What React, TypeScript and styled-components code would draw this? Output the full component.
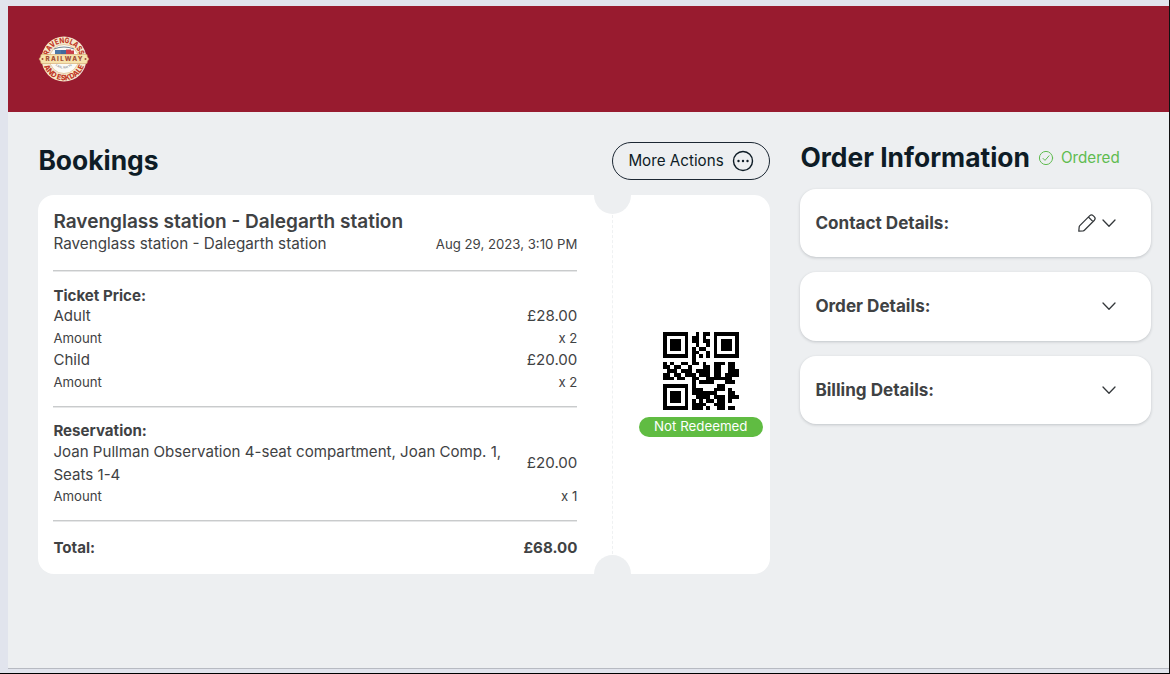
import React from "react";
import styled, { createGlobalStyle } from "styled-components";

const Global = createGlobalStyle`
  * { box-sizing: border-box; }
  body { margin: 0; background: #e1e4ed; font-family: Inter, sans-serif; color: #3f4244; }
  h1, h2, h3, p { margin: 0; }
`;
const Frame = styled.div`
  height: 674px; padding: 6px 0 4px 8px; overflow: hidden;
  background: #e1e4ed; border-right: 1px solid #111; border-bottom: 1px solid #000;
`;
const Page = styled.div`
  height: 663px; background: #edeff1; border-bottom: 1px solid #b7bac2;
`;
const Header = styled.header`
  height: 106px; padding: 0 30px; display: flex; align-items: center; background: #981b2f;
`;
const Content = styled.main`
  display: grid; grid-template-columns: 732px 351px; column-gap: 30px; padding: 30px 0 0 30.4px;
`;
const BookingsHead = styled.div`
  height: 38px; display: flex; align-items: center; justify-content: space-between;
`;
const Heading = styled.h1`
  padding-bottom: 2px; font-size: 26.4px; line-height: 32px; font-weight: 700; color: #0e1c26; white-space: nowrap;
`;
const ActionsButton = styled.button`
  width: 158px; height: 38px; padding: 0 15px; border: 1px solid #1c2733; border-radius: 19px;
  display: flex; align-items: center; justify-content: space-between;
  background: transparent; color: #0e1c26; font: 400 15.2px Inter, sans-serif; white-space: nowrap;
`;
const ActionsLabel = styled.span`padding-bottom: 1px;`;
const Ticket = styled.section`
  position: relative; display: flex; height: 379.4px; margin-top: 15px; overflow: hidden;
  border-radius: 16px; background: #fff;
`;
const Details = styled.div`
  width: 574.5px; padding: 15px 34.5px 0 15px; border-right: 1px dashed #eff1f2;
`;
const Notch = styled.span<{ $edge: "top" | "bottom" }>`
  position: absolute; left: 555.6px; ${(p) => p.$edge}: -19px;
  width: 37px; height: 38px; border-radius: 50%; background: #edeff1;
`;
const Stub = styled.div`
  flex: 1; display: flex; flex-direction: column; align-items: center; padding: 137px 0 0 18.3px;
`;
const Badge = styled.div`
  width: 124px; height: 20px; margin-top: 6.5px; border-radius: 10px; background: #60bc42;
  color: #fff; font-size: 13.3px; line-height: 19px; text-align: center;
`;
const TripTitle = styled.h2`
  font-size: 19.05px; line-height: 23px; height: 23px; font-weight: 600; white-space: nowrap;
`;
const Row = styled.div<{ $h: number; $size?: number; $bold?: boolean; $lift?: boolean }>`
  display: flex; align-items: center; justify-content: space-between;
  height: ${(p) => p.$h}px; padding-bottom: ${(p) => (p.$lift ? 1.5 : 0)}px;
  font-size: ${(p) => p.$size ?? 15.1}px; line-height: 23px;
  font-weight: ${(p) => (p.$bold ? 700 : 400)}; white-space: nowrap;
`;
const TripRow = styled(Row)`line-height: 20px; padding-bottom: 0; font-size: 15.25px;`;
const Small = styled.span`font-size: 13.2px;`;
const SeatName = styled.span`width: 460px; white-space: normal;`;
const Rule = styled.hr<{ $top: number }>`
  height: 2px; margin: ${(p) => p.$top}px 0 13px; border: 0; border-top: 1px solid #c9cbcc; border-bottom: 1px solid #e6e7e8;
`;
const OrderHead = styled.div`
  display: flex; align-items: center; height: 32px; margin-bottom: 15px;
`;
const Status = styled.span`
  display: flex; align-items: center; gap: 7px; margin-left: 8px; color: #60bc50; font-size: 15.2px; line-height: 18px;
`;
const Panel = styled.section<{ $h: number }>`
  display: flex; align-items: center; justify-content: space-between;
  height: ${(p) => p.$h}px; margin-bottom: 15px; padding: 0 34px 1px 15px; border-radius: 16px;
  background: #fff; box-shadow: 0 1px 3px rgba(40, 50, 60, 0.22);
`;
const PanelTitle = styled.h3`font-size: 17.1px; line-height: 20px; font-weight: 650;`;
const Icons = styled.div`display: flex; align-items: center; gap: 4px;`;

const Logo = () => (
  <svg width="52" height="48" viewBox="0 0 52 48" fontFamily="Inter, sans-serif">
    <circle cx="26" cy="24" r="22.5" fill="#f5e9cc" />
    <circle cx="26" cy="24" r="14.5" fill="#fbfaf5" stroke="#d8ad7c" strokeWidth=".6" />
    <path id="arcTop" d="M10 24a16 16 0 0 1 32 0" fill="none" />
    <path id="arcBottom" d="M4.7 24a21.3 21.3 0 0 0 42.6 0" fill="none" />
    <path id="arcInner" d="M15 24.500a11 9 0 0 0 22 0" fill="none" />
    <text fontSize="7.6" fontWeight="800" fill="#c23a28">
      <textPath href="#arcTop" startOffset="50%" textAnchor="middle" textLength="43" lengthAdjust="spacingAndGlyphs">RAVENGLASS</textPath>
    </text>
    <text fontSize="7.6" fontWeight="800" fill="#c23a28">
      <textPath href="#arcBottom" startOffset="50%" textAnchor="middle" textLength="52" lengthAdjust="spacingAndGlyphs">AND ESKDALE</textPath>
    </text>
    <text fontSize="3" fill="#5b6b78">
      <textPath href="#arcInner" startOffset="50%" textAnchor="middle">LAAL RATTY</textPath>
    </text>
    <path d="M16 14q10-4 20 0" stroke="#53697c" strokeWidth=".8" fill="none" />
    <path d="M17 15h6v4h-6z" fill="#4c78a5" />
    <path d="M23 15h5v4h-5z" fill="#426b9c" />
    <path d="M28 14.5h5v1h3v3.5h-8z" fill="#c8404a" />
    <path d="M3 19.5h46q-.2 2.5 2 4.5-2.2 2-2 4.5H3q.2-2.5-2-4.5 2.2-2 2-4.5z" fill="#f6e2ac" stroke="#d2a568" strokeWidth=".6" />
    <text x="26" y="26.3" fontSize="6.3" fontWeight="800" fill="#a24d35" textAnchor="middle" textLength="37">RAILWAY</text>
    <circle cx="4.5" cy="24" r="1" fill="#a24d35" />
    <circle cx="47.5" cy="24" r="1" fill="#a24d35" />
  </svg>
);

const qr = [
  "111111100101101111111",
  "100000101101001000001",
  "101110101101101011101",
  "101110100100101011101",
  "101110101011001011101",
  "100000101100101000001",
  "111111101010101111111",
  "000000001000000000000",
  "101001101101001110110",
  "110110010001101100110",
  "011101110111101100111",
  "110110111011101101111",
  "111011001100111111100",
  "000000001011110001110",
  "111111101000000110000",
  "100000101110001110100",
  "101110101111111000110",
  "101110100111101110111",
  "101110101010110110100",
  "100000101111001110000",
  "111111101110100110110",
];
const QrCode = () => (
  <svg width="76" height="78" viewBox="0 0 21 21" preserveAspectRatio="none" shapeRendering="crispEdges">
    <path fill="#000" d={qr.map((r, y) => [...r].map((c, x) => (c === "1" ? `M${x} ${y}h1v1h-1z` : "")).join("")).join("")} />
  </svg>
);
const Chevron = () => (
  <svg width="16" height="16" viewBox="0 0 16 16" fill="none" stroke="#34383b" strokeWidth="1.3" strokeLinecap="round" strokeLinejoin="round">
    <path d="M2 5l6 6.2L14 5" />
  </svg>
);
const Pencil = () => (
  <svg width="20" height="20" viewBox="0 0 20 20" fill="none" stroke="#34383b" strokeWidth="1.25" strokeLinejoin="round">
    <path d="M1.8 18.2l.4-4.4q.1-.7.6-1.2L12.8 2.6q1.7-1.5 3.3 0l1.3 1.3q1.500 1.600 0 3.300L7.400 17.200q-.5.5-1.2.6zM11.400 4l4.600 4.600" />
  </svg>
);
const Dots = () => (
  <svg width="22" height="22" viewBox="0 0 22 22" fill="none">
    <circle cx="11" cy="11" r="9.5" stroke="#0e1c26" strokeWidth="1.4" />
    <g fill="#0e1c26"><circle cx="6.5" cy="11" r="1.2" /><circle cx="11" cy="11" r="1.2" /><circle cx="15.5" cy="11" r="1.2" /></g>
  </svg>
);
const Check = () => (
  <svg width="16" height="16" viewBox="0 0 16 16" fill="none" stroke="#60bc50" strokeLinecap="round" strokeLinejoin="round">
    <circle cx="8" cy="8" r="6.6" /><path d="M5 8.4l2 2 4-4.6" />
  </svg>
);

const Fare = ({ name, price }: { name: string; price: string }) => (
  <>
    <Row $h={22} $lift><span>{name}</span><span>{price}</span></Row>
    <Row $h={22} $size={13.2}><span>Amount</span><span>x 2</span></Row>
  </>
);

export default function App() {
  return (
    <Frame>
      <Global />
      <Page>
        <Header><Logo /></Header>
        <Content>
          <div>
            <BookingsHead>
              <Heading>Bookings</Heading>
              <ActionsButton><ActionsLabel>More Actions</ActionsLabel><Dots /></ActionsButton>
            </BookingsHead>
            <Ticket>
              <Details>
                <TripTitle>Ravenglass station - Dalegarth station</TripTitle>
                <TripRow $h={22}><span>Ravenglass station - Dalegarth station</span><Small>Aug 29, 2023, 3:10 PM</Small></TripRow>
                <Rule $top={15} />
                <Row $h={20} $bold>Ticket Price:</Row>
                <Fare name="Adult" price="£28.00" />
                <Fare name="Child" price="£20.00" />
                <Rule $top={13} />
                <Row $h={20} $bold $lift>Reservation:</Row>
                <Row $h={45} $lift><SeatName>Joan Pullman Observation 4-seat compartment, Joan Comp. 1, Seats 1-4</SeatName><span>£20.00</span></Row>
                <Row $h={20} $size={13.2}><span>Amount</span><span>x 1</span></Row>
                <Rule $top={14} />
                <Row $h={25} $bold><span>Total:</span><span>£68.00</span></Row>
              </Details>
              <Stub>
                <QrCode />
                <Badge>Not Redeemed</Badge>
              </Stub>
              <Notch $edge="top" />
              <Notch $edge="bottom" />
            </Ticket>
          </div>
          <aside>
            <OrderHead>
              <Heading>Order Information</Heading>
              <Status><Check />Ordered</Status>
            </OrderHead>
            <Panel $h={68}><PanelTitle>Contact Details:</PanelTitle><Icons><Pencil /><Chevron /></Icons></Panel>
            <Panel $h={69}><PanelTitle>Order Details:</PanelTitle><Chevron /></Panel>
            <Panel $h={68}><PanelTitle>Billing Details:</PanelTitle><Chevron /></Panel>
          </aside>
        </Content>
      </Page>
    </Frame>
  );
}
